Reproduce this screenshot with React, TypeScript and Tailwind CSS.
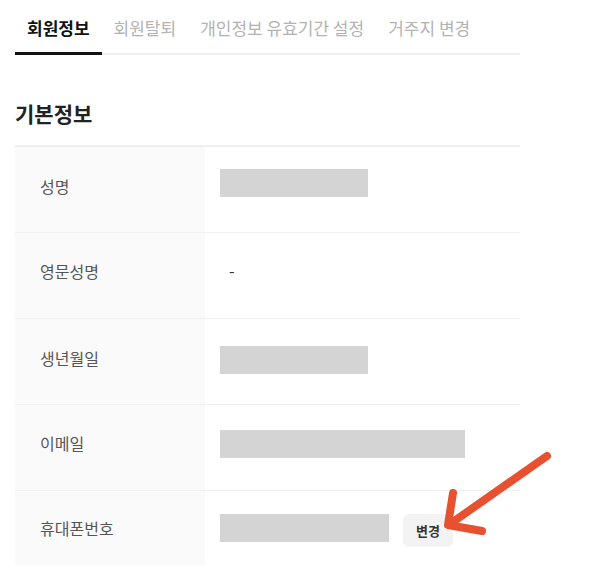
const tabs = ["회원정보", "회원탈퇴", "개인정보 유효기간 설정", "거주지 변경"];

type Row = {
  label: string,
  value: "block" | "dash" | "phone",
  width?: number,
  lift: number,
  blockLift: number
}

// lift values nudge label/value up a few px, as in the original layout
const rows: Row[] = [
  { label: "성명", value: "block", width: 148, lift: 8, blockLift: 14 },
  { label: "영문성명", value: "dash", lift: 10, blockLift: 12 },
  { label: "생년월일", value: "block", width: 148, lift: 8, blockLift: 4 },
  { label: "이메일", value: "block", width: 245, lift: 10, blockLift: 8 },
  { label: "휴대폰번호", value: "phone", width: 169, lift: 0, blockLift: 0 },
];

const App = () => {
  return (
    <div
      className="relative w-[592px] h-[578px] bg-white overflow-hidden"
      style={{ fontFamily: '"Noto Sans CJK KR", "Noto Sans", sans-serif' }}
    >
      <div className="w-[505px] ml-[15px]">
        {/* Tabs */}
        <div className="flex pt-4 border-b-2 border-[#efefef]">
          {tabs.map((tab, i) => (
            <div
              key={tab}
              className={
                i === 0
                  ? "px-3 pb-3 -mb-[2px] border-b-[3px] border-[#111] text-[17px] leading-[24px] font-bold text-[#111]"
                  : "px-3 pb-3 -mb-[2px] border-b-[3px] border-transparent text-[17px] leading-[24px] text-[#b3b3b3]"
              }
            >
              {tab}
            </div>
          ))}
        </div>

        {/* Basic info */}
        <h2 className="mt-[43px] text-[21px] leading-[30px] font-bold text-[#222]">기본정보</h2>

        <div className="mt-[17px] border-t-2 border-[#efefef]">
          {rows.map((row, i) => (
            <div
              key={row.label}
              className={
                i === rows.length - 1
                  ? "flex h-[74px]"
                  : "flex h-[86px] border-b border-[#f0f0f0]"
              }
            >
              <div className="w-[190px] shrink-0 bg-[#fafafa] flex items-center pl-[25px] text-[16px] text-[#555]">
                <span style={{ marginBottom: row.lift }}>{row.label}</span>
              </div>
              <div className="flex-1 flex items-center pl-[15px]">
                {row.value === "dash" && (
                  <span className="ml-[9px] text-[16px] text-[#333]" style={{ marginBottom: row.blockLift }}>-</span>
                )}
                {row.value === "block" && (
                  <div
                    className="h-[28px] bg-[#d4d4d4]"
                    style={{ width: row.width, marginBottom: row.blockLift }}
                  />
                )}
                {row.value === "phone" && (
                  <div className="flex items-center gap-[14px]">
                    <div className="h-[28px] bg-[#d4d4d4]" style={{ width: row.width }} />
                    <button className="w-[50px] h-[33px] mt-[5px] rounded-md bg-[#f3f3f3] text-[13px] font-bold text-[#333]">
                      변경
                    </button>
                  </div>
                )}
              </div>
            </div>
          ))}
        </div>
      </div>

      {/* Annotation arrow */}
      <svg className="absolute left-0 top-0" width="592" height="578" viewBox="0 0 592 578">
        <g stroke="#e8512f" strokeWidth="8" strokeLinecap="round" strokeLinejoin="round" fill="none">
          <line x1="547" y1="456" x2="450" y2="524" />
          <polyline points="453,493 448,525 482,531" />
        </g>
      </svg>
    </div>
  );
};

export default App;
